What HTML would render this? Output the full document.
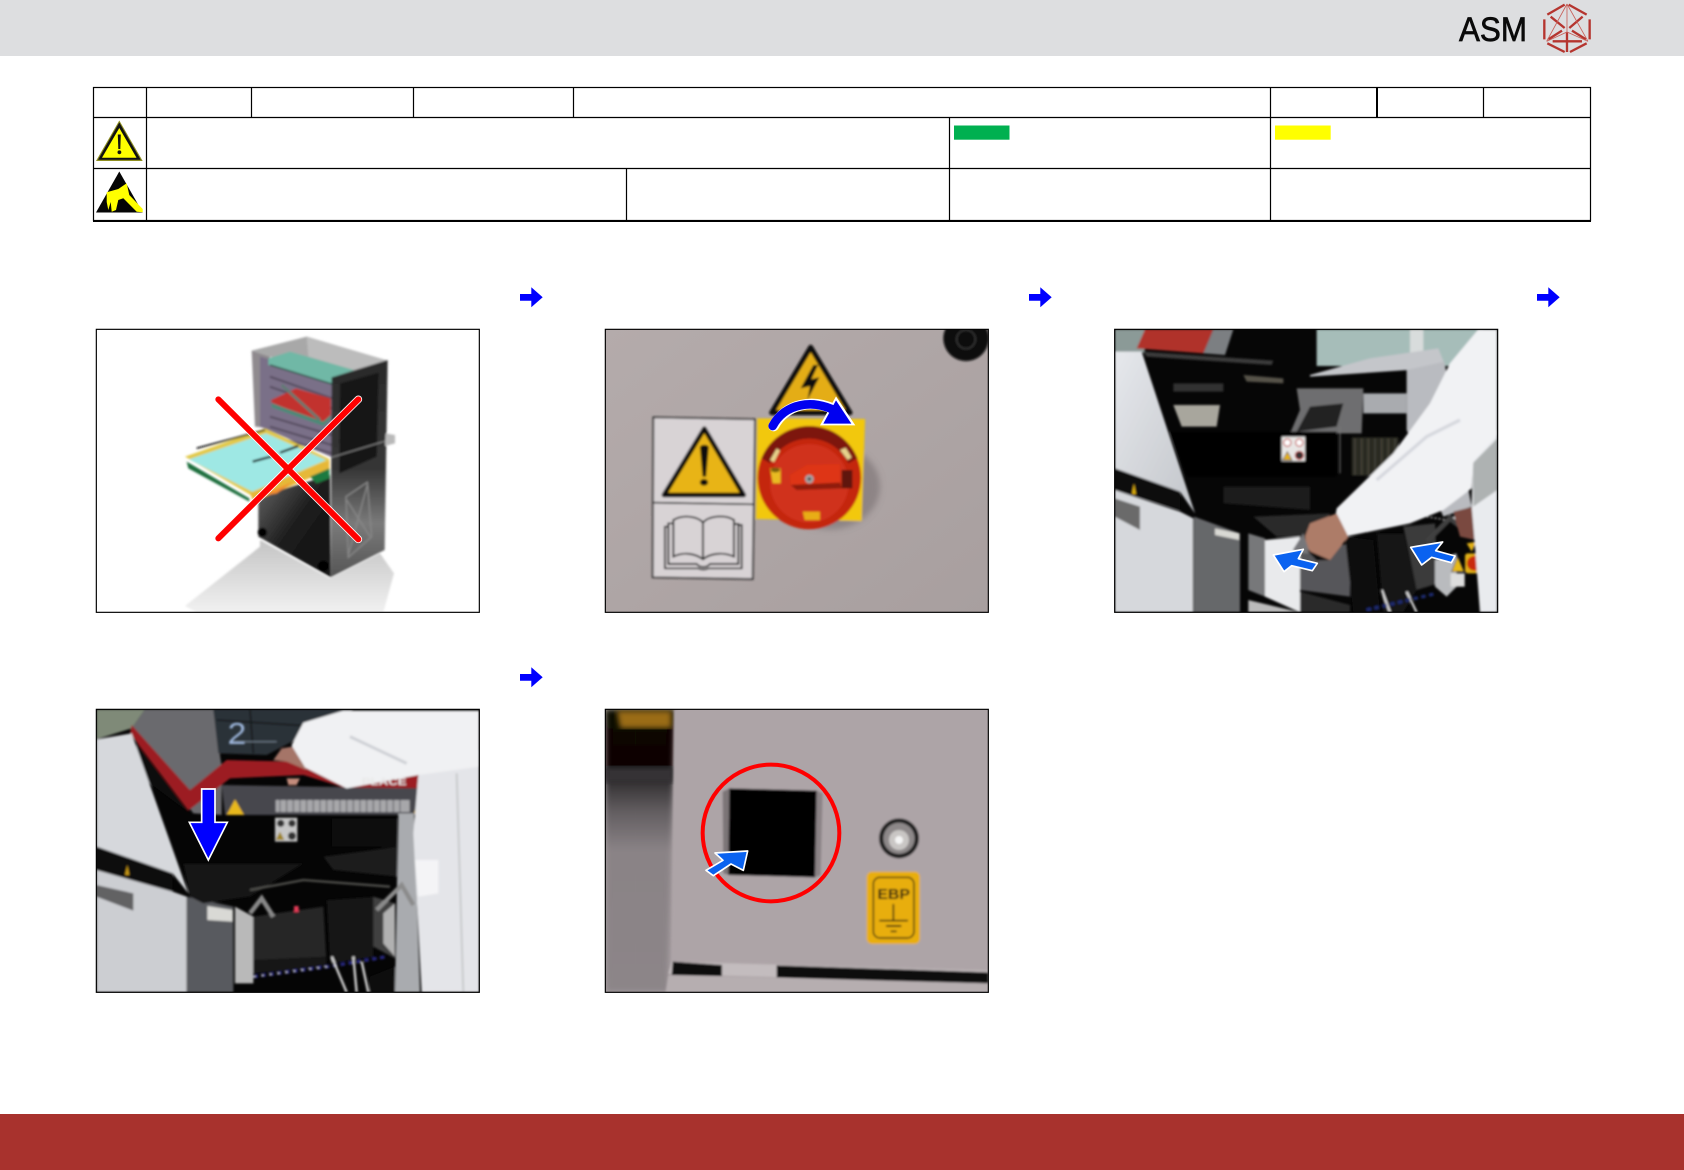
<!DOCTYPE html>
<html lang="en">
<head>
<meta charset="utf-8">
<title>ASM</title>
<style>
html,body{margin:0;padding:0;background:#fff;width:1684px;height:1170px;overflow:hidden}
svg{display:block}
text{font-family:"Liberation Sans",sans-serif}
</style>
</head>
<body>
<svg xmlns="http://www.w3.org/2000/svg" width="1684" height="1170" viewBox="0 0 1684 1170">
<defs>
<filter id="b" x="-5%" y="-5%" width="110%" height="110%"><feGaussianBlur stdDeviation="3.5"/></filter>
<filter id="b2" x="-5%" y="-5%" width="110%" height="110%"><feGaussianBlur stdDeviation="9"/></filter>
<clipPath id="c1"><rect x="19" y="28" width="1149" height="849"/></clipPath>
<clipPath id="c2"><rect x="16" y="28" width="1149" height="849"/></clipPath>
<clipPath id="c3"><rect x="14" y="28" width="1149" height="849"/></clipPath>
<clipPath id="c4"><rect x="19" y="28" width="1149" height="849"/></clipPath>
<clipPath id="c5"><rect x="16" y="28" width="1149" height="849"/></clipPath>
<linearGradient id="cabR" x1="0" y1="0" x2="0" y2="1"><stop offset="0" stop-color="#2a2a2a"/><stop offset=".5" stop-color="#363636"/><stop offset=".75" stop-color="#7a7a7a"/><stop offset="1" stop-color="#555"/></linearGradient>
<linearGradient id="cabF" x1="0" y1="0" x2="1" y2="1"><stop offset="0" stop-color="#6a6a6a"/><stop offset=".5" stop-color="#1c1c1c"/><stop offset="1" stop-color="#111"/></linearGradient>
<linearGradient id="refl" x1="0" y1="0" x2="0" y2="1"><stop offset="0" stop-color="#c4c4c4"/><stop offset="1" stop-color="#f1f1f1"/></linearGradient>
<linearGradient id="wall" x1="0" y1="0" x2="1" y2="1"><stop offset="0" stop-color="#b4abab"/><stop offset="1" stop-color="#a89f9f"/></linearGradient>
<linearGradient id="pan" x1="0" y1="0" x2="1" y2="1"><stop offset="0" stop-color="#e6e8ec"/><stop offset="1" stop-color="#c2c5ca"/></linearGradient>
<linearGradient id="drk5" x1="0" y1="0" x2="0" y2="1"><stop offset="0" stop-color="#0c0704"/><stop offset=".2" stop-color="#070606"/><stop offset=".27" stop-color="#3a3739"/><stop offset=".36" stop-color="#625d60"/><stop offset=".5" stop-color="#8a8386"/><stop offset="1" stop-color="#8c8588"/></linearGradient>
</defs>

<!-- header / footer -->
<rect x="0" y="0" width="1684" height="56" fill="#dddee0"/>
<rect x="0" y="1114" width="1684" height="56" fill="#a8322d"/>

<!-- logo -->
<text x="1459" y="41" font-size="34" fill="#0a0a0a" stroke="#0a0a0a" stroke-width=".7" textLength="68" lengthAdjust="spacingAndGlyphs">ASM</text>
<g transform="translate(1440,0) scale(.3333)" fill="none" stroke="#b5352f">
  <g stroke-width="7">
    <path d="M386 14L440 44M374 14L322 44M449 58V118M313 58V118M440 130L390 156M322 130L374 156"/>
    <path d="M332 50L374 84M428 50L388 84M325 118L366 92M438 118L396 92"/>
    <path d="M381 96V156M338 124H426"/>
  </g>
  <g stroke-width="2.5" stroke="#c8605a">
    <path d="M381 12L320 124M381 12L444 124M381 12V96M320 124L381 96L444 124"/>
  </g>
</g>

<!-- table -->
<g fill="none" stroke="#000" stroke-width="1.2">
  <rect x="93.5" y="87.5" width="1497" height="133"/>
  <path d="M93 117.5H1591M93 168.5H1591"/>
  <path d="M146.5 87V221M251.5 87V117M413.5 87V117M573.5 87V117M1270.5 87V221M1483.5 87V117M949.5 117V221M626.5 168V221"/>
</g>
<path d="M1377 87V117" stroke="#000" stroke-width="2"/>
<path d="M93 221H1591" stroke="#000" stroke-width="2"/>
<rect x="954" y="125.5" width="55.500" height="14.200" fill="#00b050"/>
<rect x="1275" y="125.500" width="55.700" height="14.200" fill="#ffff00"/>

<!-- warning icon -->
<path d="M119.300 120.500L142.700 161H96Z" fill="#8f8f20"/>
<path d="M119.300 122.500L140.700 159.800H98Z" fill="#111"/>
<path d="M119.300 128L136.500 157.700H102Z" fill="#ffff00"/>
<path d="M117.800 134.500H120.800L120.300 149H118.300Z" fill="#111"/>
<circle cx="119.400" cy="152.300" r="1.900" fill="#111"/>
<!-- ESD icon -->
<path d="M119.300 171.500L142.700 212.500H96Z" fill="#050505"/>
<path d="M106.700 192.300L118.300 189L126.700 183.300L129.300 195L142.700 209V212.300L136.700 211.700L123.300 198.300L118.300 200L116 210L111.700 211.700L110.700 202L108.300 210L106.700 202Z" fill="#ffff00"/>

<!-- arrows -->
<g fill="#0000ff">
  <path d="M520 294H531.300V287.300L542.700 297.300L531.300 307.300V300.700H520Z"/>
  <path d="M1029 294H1040.300V287.300L1051.700 297.300L1040.300 307.300V300.700H1029Z"/>
  <path d="M1537 294H1548.300V287.300L1559.700 297.300L1548.300 307.300V300.700H1537Z"/>
  <path d="M520 674H531.300V667.300L542.700 677.300L531.300 687.300V680.700H520Z"/>
</g>

<!-- SCENE 1 -->
<g transform="translate(90,320) scale(.33333)">
  <rect x="19" y="28" width="1149" height="849" fill="#fff"/>
  <g clip-path="url(#c1)">
    <g filter="url(#b)">
      <path d="M285 858L510 680V660L720 775L870 700L912 760L880 877H320Z" fill="url(#refl)"/>
      <path d="M485 92L650 50L893 122L727 172Z" fill="#a8a8a8"/>
      <path d="M650 50L893 122L790 150L655 110Z" fill="#bcbcbc"/>
      <path d="M485 92L540 110L540 325L495 320Z" fill="#8f8a8e"/>
      <path d="M510 110L727 172V412L510 320Z" fill="#7a7088"/>
      <g stroke="#544c5e" stroke-width="6"><path d="M540 170L725 235M540 200L725 265M540 290L725 345M540 320L725 375M540 345L725 400"/></g>
      <path d="M535 115L600 95L792 150L727 172V195L535 135Z" fill="#6fb8a6"/>
      <path d="M540 135L725 192" stroke="#37564f" stroke-width="5"/>
      <path d="M543 240L618 205L722 235V285L700 312L545 248Z" fill="#c2332d"/>
      <path d="M575 195L690 300" stroke="#5e7c72" stroke-width="8"/>
      <path d="M545 250L700 305L722 285L720 300L700 318L545 262Z" fill="#4b8a78"/>
      <path d="M505 530L720 465L722 772L505 650Z" fill="url(#cabF)"/>
      <path d="M725 172L893 120L884 690L722 772Z" fill="url(#cabR)"/>
      <path d="M750 190L866 158L860 410L748 460Z" fill="#151515"/>
      <path d="M725 412L890 362" stroke="#aaa" stroke-width="2"/>
      <path d="M768 530L832 487L845 650L775 712Z" fill="none" stroke="#888" stroke-width="4"/>
      <path d="M770 540L840 650M832 495L775 705" stroke="#888" stroke-width="4"/>
      <path d="M887 340L915 345V370L885 378Z" fill="#b9b9b9"/>
      <circle cx="517" cy="637" r="14" fill="#000"/><circle cx="700" cy="738" r="16" fill="#000"/>
      <path d="M285 410L525 325L720 418L490 530Z" fill="#e2c94a"/>
      <path d="M297 418L528 340L708 420L487 515Z" fill="#9ee8e4"/>
      <path d="M290 425L478 535V545L295 445Z" fill="#1c6e3c"/>
      <path d="M480 520L490 545L718 450V420Z" fill="#e6b838"/>
      <path d="M660 470L718 445V475L680 490Z" fill="#1e7a40"/>
      <path d="M505 530L610 485L560 520Z" fill="#f28c2e"/>
      <path d="M320 385L525 330" stroke="#111" stroke-width="5"/>
      <path d="M488 425L560 405M570 398L625 378" stroke="#111" stroke-width="7"/>
    </g>
    <g fill="none" stroke-linecap="round">
      <path d="M385 238L805 658M385 655L805 238" stroke="#fff" stroke-width="23"/>
      <path d="M385 238L805 658M385 655L805 238" stroke="#f00" stroke-width="18"/>
    </g>
  </g>
  <rect x="19" y="28" width="1149" height="849" fill="none" stroke="#000" stroke-width="3.500"/>
</g>

<!-- SCENE 2 -->
<g transform="translate(600,320) scale(.33333)">
  <rect x="16" y="28" width="1149" height="849" fill="url(#wall)"/>
  <g clip-path="url(#c2)">
    <g filter="url(#b)">
      <circle cx="1098" cy="55" r="68" fill="#0c0c0c"/>
      <circle cx="1098" cy="58" r="28" fill="none" stroke="#3a3a3a" stroke-width="4"/>
      <path d="M632 82L515 278H750Z" fill="#e4ad18" stroke="#111" stroke-width="15" stroke-linejoin="round"/>
      <path d="M640 135L602 205L630 198L622 240L658 172L634 178L654 135Z" fill="#111"/>
      <ellipse cx="690" cy="500" rx="150" ry="128" fill="#8d8485" filter="url(#b2)"/>
      <path d="M472 295L795 297L785 603L468 597Z" fill="#f2c808"/>
      <circle cx="628" cy="473" r="155" fill="#c42610"/>
      <path d="M485 415A155 155 0 0 1 772 415L745 430A130 130 0 0 0 510 430Z" fill="#7d1508"/>
      <circle cx="628" cy="490" r="118" fill="#d0311a"/>
      <path d="M510 420L530 385L540 392L522 427Z" fill="#e6d38c"/>
      <path d="M720 390L737 383L755 412L743 420Z" fill="#e6d38c"/>
      <path d="M510 445H542V490H518Z" fill="#e8bb20"/>
      <ellipse cx="526" cy="450" rx="14" ry="7" fill="#7a5d10"/>
      <path d="M570 465L620 435L720 432V488L572 495Z" fill="#de3414"/>
      <path d="M572 495L720 488L725 505L590 510Z" fill="#8f1c0c"/>
      <rect x="725" y="450" width="32" height="55" fill="#5e150a"/>
      <circle cx="628" cy="477" r="13" fill="#a5a5a5"/>
      <circle cx="628" cy="477" r="5" fill="#444"/>
      <path d="M608 575H660V600H614Z" fill="#e8ad12"/>
      <path d="M160 292L465 298L458 777L158 772Z" fill="#d8d3d5" stroke="#222" stroke-width="5"/>
      <path d="M160 548L462 553" stroke="#222" stroke-width="5"/>
      <path d="M313 326L192 525H431Z" fill="#e8b413" stroke="#111" stroke-width="14" stroke-linejoin="round"/>
      <path d="M300 382C300 372 326 372 326 382L318 470H308Z" fill="#111"/>
      <ellipse cx="312" cy="487" rx="12" ry="10" fill="#111"/>
      <g fill="none" stroke="#111" stroke-width="5">
        <path d="M220 710V600C250 582 295 590 309 608C325 588 375 582 402 600V710C370 695 330 700 309 718C285 700 250 695 220 710Z"/>
        <path d="M309 608V718"/>
        <path d="M220 610H205V732H290C300 744 320 744 330 732H415V612H402"/>
        <path d="M205 620H195V745H295C305 750 315 750 325 745H425V615H415"/>
      </g>
    </g>
    <path d="M521 318C560 248 640 238 702 268" fill="none" stroke="#fff" stroke-width="32" stroke-linecap="round"/>
    <path d="M660 316L708 229L766 316Z" fill="#fff"/>
    <path d="M518 318C555 248 640 238 705 272" fill="none" stroke="#0000f0" stroke-width="26" stroke-linecap="round"/>
    <path d="M670 311L708 241L754 311Z" fill="#0000f0"/>
  </g>
  <rect x="16" y="28" width="1149" height="849" fill="none" stroke="#000" stroke-width="3.500"/>
</g>

<!-- SCENE 3 -->
<g transform="translate(1110,320) scale(.33333)">
  <rect x="14" y="28" width="1149" height="849" fill="#060606"/>
  <g clip-path="url(#c3)">
    <g filter="url(#b)">
      <rect x="14" y="28" width="90" height="70" fill="#8b9a97"/>
      <rect x="620" y="28" width="500" height="110" fill="#a6bdb9"/>
      <rect x="900" y="28" width="40" height="70" fill="#d8dcdc"/>
      <path d="M80 85L105 28H310L280 100Z" fill="#b0322a"/>
      <path d="M280 100L310 28H370L345 105Z" fill="#7c7f82"/>
      <path d="M100 95L490 122L485 135L110 110Z" fill="#3a3a3a"/>
      <path d="M600 165L780 115L985 85L1003 130L895 150L600 170Z" fill="#c4c6ca"/>
      <path d="M890 150L1003 125L1085 560L1000 590L890 330Z" fill="#b9bbc0"/>
      <path d="M560 205H760L755 340H540L570 270Z" fill="#6e6e70"/>
      <path d="M760 220H890V280H760Z" fill="#a9abaf"/>
      <path d="M190 255H330L320 320H215Z" fill="#a8a69d"/>
      <path d="M190 190H340V215H190Z" fill="#303030"/>
      <path d="M400 165L520 175V190L410 185Z" fill="#57534a"/>
      <path d="M600 260L700 250L680 320L560 335Z" fill="#222"/>
      <path d="M180 335H680V470H230Z" fill="#050505"/>
      <rect x="725" y="352" width="140" height="115" fill="#2b2a20"/>
      <g stroke="#5e5c50" stroke-width="2"><path d="M735 355V465M755 355V465M775 355V465M795 355V465M815 355V465M835 355V465M855 355V465"/></g>
      <path d="M690 320L690 460" stroke="#777" stroke-width="3"/>
      <rect x="515" y="350" width="70" height="73" fill="#e8e6e4"/>
      <circle cx="532" cy="368" r="11" fill="#fff" stroke="#b22" stroke-width="3"/>
      <circle cx="568" cy="368" r="11" fill="#fff" stroke="#b22" stroke-width="3"/>
      <path d="M532 395L518 420H546Z" fill="#e6b414" stroke="#222" stroke-width="2"/>
      <circle cx="568" cy="406" r="12" fill="#333" stroke="#b22" stroke-width="3"/>
      <path d="M14 95H95L255 580L210 515L14 445Z" fill="url(#pan)"/>
      <path d="M14 445L210 515V570L14 510Z" fill="#0a0a0a"/>
      <path d="M68 510L72 490L78 523H66Z" fill="#e0b010"/>
      <path d="M14 510L210 575L250 595V877H14Z" fill="#d6d8dc"/>
      <path d="M14 535L90 560V630L14 590Z" fill="#6a6a6a"/>
      <path d="M252 590L390 640V877H252Z" fill="#66686a"/>
      <path d="M315 625L388 640V660L315 645Z" fill="#d9d9d4"/>
      <path d="M340 500H600V570L340 550Z" fill="#1b1b1b"/>
      <path d="M430 590L660 580L640 650L500 650Z" fill="#2c2c2c"/>
      <path d="M415 640L465 655V830L415 810Z" fill="#77787a"/>
      <path d="M465 660L570 650V877L465 830Z" fill="#e9eaec"/>
      <path d="M415 840L570 877H415Z" fill="#bbb"/>
      <path d="M570 700L720 670V830L570 810Z" fill="#56565a"/>
      <path d="M570 815L720 855V877H570Z" fill="#2b2b2b"/>
      <path d="M705 650L790 660L810 877H730Z" fill="#0b0b0b"/>
      <path d="M800 640L880 640L920 810L880 877H820Z" fill="#121212"/>
      <path d="M880 620L975 610L985 790L920 810Z" fill="#3a3a3a"/>
      <path d="M975 720L1040 700L1040 800L1010 830L975 800Z" fill="#b9bbbe"/>
      <path d="M1025 755L1043 710L1062 755Z" fill="#e7b917" stroke="#222" stroke-width="2"/>
      <rect x="1022" y="760" width="42" height="40" fill="#ddd"/>
      <rect x="1065" y="700" width="50" height="60" rx="8" fill="#e0b014"/>
      <circle cx="1093" cy="730" r="22" fill="#c92a10"/>
      <path d="M1085 695L1070 670L1100 665Z" fill="#e0b014"/>
      <path d="M815 810L840 877M890 815L920 877" stroke="#e8e8e8" stroke-width="6"/>
      <path d="M770 870L980 820" stroke="#1c2a70" stroke-width="10" stroke-dasharray="14 10"/>
      <path d="M950 665L1020 595L1090 650" fill="none" stroke="#3f3f3f" stroke-width="16"/>
      <path d="M1030 590L1090 650" fill="none" stroke="#ddd" stroke-width="5"/>
      <path d="M1030 575L1090 560L1095 660L1050 650Z" fill="#7a4a3f"/>
      <path d="M1162 330L1088 420L1085 560L1092 640L1110 877H1162Z" fill="#e9ebee"/>
      <path d="M1088 430L1162 355V510L1090 560Z" fill="#aeb2b2"/>
      <path d="M1105 28L1162 28V345L1090 425L1085 505L1000 570L900 610L705 650L675 595L680 565L850 400L960 250L1020 130Z" fill="#f1f2f4"/>
      <path d="M800 480L950 350L1050 300" fill="none" stroke="#d6d8de" stroke-width="10"/>
      <path d="M585 650L600 610L680 580L715 650L660 720L620 722L590 680Z" fill="#ad7c68"/>
      <path d="M548 690L580 640L600 700L580 700Z" fill="#77777a"/>
      <path d="M590 690L660 720L620 722Z" fill="#111"/>
      <path d="M950 590L1010 600" stroke="#bbb" stroke-width="4" stroke-dasharray="6 6"/>
    </g>
    <g stroke="#fff" stroke-width="5" stroke-linejoin="round" fill="#0a62f0">
      <path d="M490 705L580 688L565 716L622 730L607 752L545 737L522 755Z"/>
      <path d="M902 682L998 666L977 692L1035 708L1024 728L965 712L935 735Z"/>
    </g>
  </g>
  <rect x="14" y="28" width="1149" height="849" fill="none" stroke="#000" stroke-width="3.500"/>
</g>

<!-- SCENE 4 -->
<g transform="translate(90,700) scale(.33333)">
  <rect x="19" y="28" width="1149" height="849" fill="#050505"/>
  <g clip-path="url(#c4)">
    <g filter="url(#b)">
      <path d="M19 28H165L125 85L19 118Z" fill="#7f8a78"/>
      <path d="M125 85L165 28H370L395 200L395 345L310 340Z" fill="#6a6a6e"/>
      <path d="M370 28H790L530 165L385 160Z" fill="#2b3238"/>
      <path d="M480 28L490 160M380 60L690 80" stroke="#0f1316" stroke-width="4"/>
      <path d="M420 125L560 125" stroke="#8fa0b0" stroke-width="2"/>
      <path d="M395 255L990 265L985 345L405 345Z" fill="#47474d"/>
      <path d="M125 75L300 270L410 180L620 185L700 230L985 225L990 265L760 262L640 225L420 235L295 332L120 100Z" fill="#9c1c22"/>
      <path d="M140 130L290 330L300 340L140 220Z" fill="#0a0a0a"/>
      <path d="M410 345L435 298L462 345Z" fill="#e8b81a"/>
      <rect x="557" y="300" width="402" height="36" fill="#a7a7aa"/>
      <g stroke="#5a5a60" stroke-width="3"><path d="M570 300V336M590 300V336M610 300V336M630 300V336M650 300V336M670 300V336M690 300V336M710 300V336M730 300V336M750 300V336M770 300V336M790 300V336M810 300V336M830 300V336M850 300V336M870 300V336M890 300V336M910 300V336M930 300V336"/></g>
      <path d="M972 340L985 305V345Z" fill="#d8a91a"/>
      <path d="M19 118L125 100L295 580L248 520L19 440Z" fill="#d6d8dc"/>
      <path d="M19 440L248 520V575L19 510Z" fill="#090909"/>
      <path d="M105 525L112 495L118 525Z" fill="#c99a18"/>
      <path d="M19 510L248 575L290 590V877H19Z" fill="#ccced2"/>
      <path d="M19 555L130 580V632L19 590Z" fill="#626264"/>
      <path d="M290 590L430 620V877H290Z" fill="#595a5e"/>
      <path d="M352 618L428 630V665L352 660Z" fill="#d9d9d5"/>
      <path d="M280 490H640L480 590L340 610L300 590Z" fill="#131313"/>
      <path d="M480 570L640 540L900 560" stroke="#4f4f4c" stroke-width="7" fill="none"/>
      <rect x="555" y="353" width="67" height="72" fill="#c6c6c6"/>
      <circle cx="572" cy="370" r="11" fill="#333"/><circle cx="606" cy="370" r="11" fill="#333"/>
      <path d="M570 395L557 420H583Z" fill="#9e8420"/><circle cx="606" cy="408" r="12" fill="#333"/>
      <path d="M700 470L920 440V530L730 510Z" fill="#1c1c1c"/>
      <path d="M725 355H920V440H725Z" fill="#0a0a0a"/>
      <path d="M925 340H972L990 877H915Z" fill="#a9abaf"/>
      <path d="M435 620L490 650V850L435 850Z" fill="#b9b9b9"/>
      <path d="M490 650L700 620L710 800L490 815Z" fill="#262626"/>
      <path d="M490 780L710 770V800L490 820Z" fill="#121212"/>
      <path d="M710 600L850 590L850 770L720 790Z" fill="#161616"/>
      <rect x="612" y="618" width="14" height="18" fill="#e23a56"/>
      <path d="M850 590L915 610V775L850 740Z" fill="#3f3f3f"/>
      <path d="M880 640V730L915 770V610Z" fill="#b1b1b1"/>
      <path d="M490 830L715 800L890 770" stroke="#26267f" stroke-width="10" stroke-dasharray="14 10" fill="none"/>
      <path d="M490 830L715 800" stroke="#dadada" stroke-width="4" stroke-dasharray="7 17" fill="none"/>
      <path d="M725 770L770 877M790 770L800 877M815 785L835 877" stroke="#d8d8d8" stroke-width="7" fill="none"/>
      <path d="M840 830L915 800V877H840Z" fill="#0e0e0e"/>
      <path d="M480 640L515 595L550 650" fill="none" stroke="#888" stroke-width="14"/>
      <path d="M860 630L935 555L970 615" fill="none" stroke="#8b8b8b" stroke-width="13"/>
      <path d="M985 225L1168 150V877H995L970 400Z" fill="#e4e5e9"/>
      <path d="M1100 220L1120 877" stroke="#c8cacc" stroke-width="6"/>
      <path d="M975 480H1045V580L985 590Z" fill="#f4f4f6"/>
      <path d="M605 135L640 68L760 32H1168V200L985 225L770 265L690 225L620 190Z" fill="#f0f1f3"/>
      <path d="M780 110L950 190" stroke="#cfd1d6" stroke-width="9"/>
      <path d="M550 180L575 145L607 140L650 210L590 185Z" fill="#a57468"/>
      <path d="M590 235L630 235L620 255L595 255Z" fill="#c48c7c"/>
      <text x="815" y="255" font-size="30" font-weight="bold" fill="#e8e8e8" textLength="135" lengthAdjust="spacingAndGlyphs">PLACE</text>
    </g>
    <text x="413" y="132" font-size="92" fill="#9db6dc" textLength="56" lengthAdjust="spacingAndGlyphs" filter="url(#b)">2</text>
    <path d="M335 267H375V367H412L355 480L298 367H335Z" fill="#0000ff" stroke="#fff" stroke-width="5" stroke-linejoin="miter"/>
  </g>
  <rect x="19" y="28" width="1149" height="849" fill="none" stroke="#000" stroke-width="3.500"/>
</g>

<!-- SCENE 5 -->
<g transform="translate(600,700) scale(.33333)">
  <rect x="16" y="28" width="1149" height="849" fill="#aca3a6"/>
  <g clip-path="url(#c5)">
    <path d="M16 28H225L205 877H16Z" fill="url(#drk5)" filter="url(#b2)"/>
    <path d="M50 32H215V85H60Z" fill="#9a6c12" filter="url(#b2)"/>
    <path d="M16 200H222V250H16Z" fill="#343234" filter="url(#b2)"/>
    <g filter="url(#b)">
      <path d="M222 28H1165V812L215 785Z" fill="#ada4a7"/>
      <path d="M215 785L1165 812V850L205 822Z" fill="#c3bcbe"/>
      <path d="M218 785L366 795V828L215 825Z" fill="#0c0c0c"/>
      <path d="M530 796L1165 817V851L530 832Z" fill="#0c0c0c"/>
      <path d="M205 826L1165 850V877H197Z" fill="#b6aeb0"/>
      <path d="M368 275L388 265V525L370 520Z" fill="#7b7477"/>
      <path d="M650 272L668 280L662 525L645 532Z" fill="#8b8386"/>
      <path d="M388 265L650 272L645 532L385 525Z" fill="#020202"/>
      <circle cx="897" cy="415" r="60" fill="#1d1b1c"/>
      <circle cx="897" cy="415" r="47" fill="#8d8889"/>
      <circle cx="897" cy="420" r="30" fill="#c9c6c4"/>
      <circle cx="897" cy="420" r="12" fill="#f5f5f5"/>
      <rect x="800" y="515" width="160" height="217" rx="16" fill="#e8ae10"/>
      <rect x="820" y="532" width="122" height="182" rx="20" fill="none" stroke="#5f4a10" stroke-width="5"/>
      <path d="M880 612V662M838 662H924M858 678H904M872 694H890" stroke="#3a2d0a" stroke-width="5" fill="none"/>
      <text x="832" y="597" font-size="44" font-weight="bold" fill="#2b2208" textLength="98" lengthAdjust="spacingAndGlyphs">EBP</text>
    </g>
    <circle cx="513" cy="399" r="205" fill="none" stroke="#f00" stroke-width="12"/>
    <path d="M443 453L345 459L369 481L318 511L340 527L393 492L430 511Z" fill="#0a62f0" stroke="#fff" stroke-width="5" stroke-linejoin="round"/>
  </g>
  <rect x="16" y="28" width="1149" height="849" fill="none" stroke="#000" stroke-width="3.500"/>
</g>
</svg>
</body>
</html>
